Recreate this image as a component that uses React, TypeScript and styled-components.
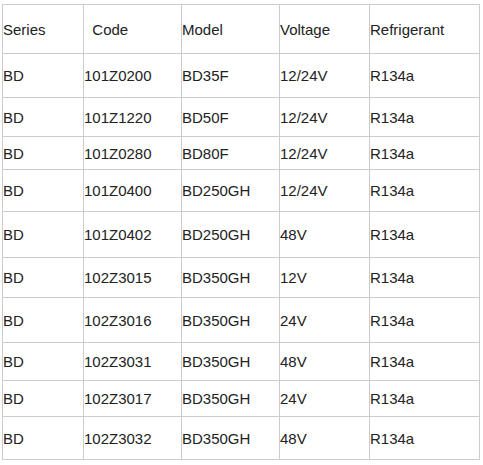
import React from "react";
import styled, { createGlobalStyle } from "styled-components";

const GlobalStyle = createGlobalStyle`
  html, body {
    margin: 0;
    padding: 0;
    background: #ffffff;
  }
  body {
    font-family: "Liberation Sans", Arial, sans-serif;
  }
`;

const Page = styled.div`
  padding: 4px 0 0 2px;
`;

const Table = styled.table`
  border-collapse: separate;
  border-spacing: 0;
  table-layout: fixed;
  width: 478px;
  border-top: 1px solid #cccccc;
  border-left: 1px solid #cccccc;
  font-family: "Liberation Sans", Arial, sans-serif;
  font-size: 15px;
  color: #222222;
`;

const Cell = styled.td<{ $w?: number }>`
  box-sizing: border-box;
  padding: 0;
  border-right: 1px solid #cccccc;
  border-bottom: 1px solid #cccccc;
  text-align: left;
  vertical-align: middle;
  font-weight: normal;
  white-space: nowrap;
  line-height: 17px;
  ${(p) => (p.$w ? `width: ${p.$w}px;` : "")}
`;

const HeadCell = styled(Cell).attrs({ as: "th" })``;

const Row = styled.tr<{ $h: number }>`
  height: ${(p) => p.$h}px;
`;

const widths = [81, 98, 98, 90, 110];

const header = ["Series", "\u00a0 Code", "Model", "Voltage", "Refrigerant"];

const rows: { h: number; cells: string[] }[] = [
  { h: 44, cells: ["BD", "101Z0200", "BD35F", "12/24V", "R134a"] },
  { h: 39, cells: ["BD", "101Z1220", "BD50F", "12/24V", "R134a"] },
  { h: 33, cells: ["BD", "101Z0280", "BD80F", "12/24V", "R134a"] },
  { h: 42, cells: ["BD", "101Z0400", "BD250GH", "12/24V", "R134a"] },
  { h: 46, cells: ["BD", "101Z0402", "BD250GH", "48V", "R134a"] },
  { h: 40, cells: ["BD", "102Z3015", "BD350GH", "12V", "R134a"] },
  { h: 45, cells: ["BD", "102Z3016", "BD350GH", "24V", "R134a"] },
  { h: 38, cells: ["BD", "102Z3031", "BD350GH", "48V", "R134a"] },
  { h: 36, cells: ["BD", "102Z3017", "BD350GH", "24V", "R134a"] },
  { h: 43, cells: ["BD", "102Z3032", "BD350GH", "48V", "R134a"] },
];

export default function App() {
  return (
    <>
      <GlobalStyle />
      <Page>
        <Table>
          <thead>
            <Row $h={49}>
              {header.map((t, i) => (
                <HeadCell key={i} $w={widths[i]}>
                  {t}
                </HeadCell>
              ))}
            </Row>
          </thead>
          <tbody>
            {rows.map((r, ri) => (
              <Row key={ri} $h={r.h}>
                {r.cells.map((c, ci) => (
                  <Cell key={ci}>{c}</Cell>
                ))}
              </Row>
            ))}
          </tbody>
        </Table>
      </Page>
    </>
  );
}
